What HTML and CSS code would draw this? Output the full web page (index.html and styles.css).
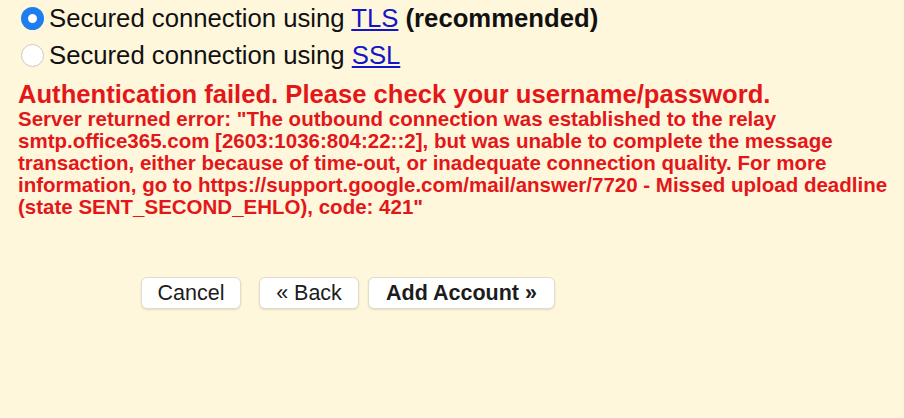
FILE: index.html
```html
<!DOCTYPE html>
<html>
<head>
<meta charset="utf-8">
<link rel="stylesheet" href="styles.css">
</head>
<body>
<div class="page">
  <div class="options">
    <label class="opt"><span class="radio checked"></span><span>Secured connection using <a href="#">TLS</a> <b>(recommended)</b></span></label>
    <label class="opt"><span class="radio"></span><span>Secured connection using <a href="#">SSL</a></span></label>
  </div>
  <div class="error">
    <div class="err-title">Authentication failed. Please check your username/password.</div>
    <div class="err-body">Server returned error: "The outbound connection was established to the relay<br>smtp.office365.com [2603:1036:804:22::2], but was unable to complete the message<br>transaction, either because of time-out, or inadequate connection quality. For more<br>information, go to https://support.google.com/mail/answer/7720 - Missed upload deadline<br>(state SENT_SECOND_EHLO), code: 421"</div>
  </div>
  <div class="buttons">
    <button class="btn cancel">Cancel</button>
    <button class="btn back">« Back</button>
    <button class="btn add">Add Account »</button>
  </div>
</div>
</body>
</html>
```
FILE: styles.css
```css
html, body {
  margin: 0;
  padding: 0;
  background: #fff7dc;
}
.page {
  font-family: "Liberation Sans", Arial, sans-serif;
  color: #111;
  padding: 3px 0 0 18px;
  height: 418px;
  box-sizing: border-box;
}
.options {
  display: flex;
  flex-direction: column;
  gap: 7px;
}
.opt {
  display: flex;
  align-items: center;
  font-size: 25.7px;
  line-height: 30px;
  gap: 5px;
}
.opt a {
  color: #1414c8;
  text-decoration: underline;
}
.radio {
  width: 23px;
  height: 23px;
  border-radius: 50%;
  box-sizing: border-box;
  border: 1px solid #cfcabd;
  background: #fff;
  flex: none;
  margin-left: 3px;
}
.radio.checked {
  border: 7px solid #1e7ef0;
  background: #fff;
}
.error {
  color: #e3161a;
  font-weight: bold;
  margin-top: 10px;
}
.err-title {
  font-size: 25.6px;
  line-height: 28px;
}
.err-body {
  font-size: 20.5px;
  line-height: 22px;
}
.buttons {
  display: flex;
  margin: 59px 0 0 123px;
}
.btn {
  font-family: "Liberation Sans", Arial, sans-serif;
  font-size: 21.5px;
  color: #1c1c1c;
  background: #fff;
  border: 1px solid #e2dccb;
  border-radius: 6px;
  height: 32px;
  padding: 0;
  box-shadow: 0 1px 2px rgba(0,0,0,0.12);
}
.cancel { width: 100px; }
.back { width: 100px; margin-left: 18px; }
.add { width: 187px; margin-left: 9px; font-weight: bold; }
```
